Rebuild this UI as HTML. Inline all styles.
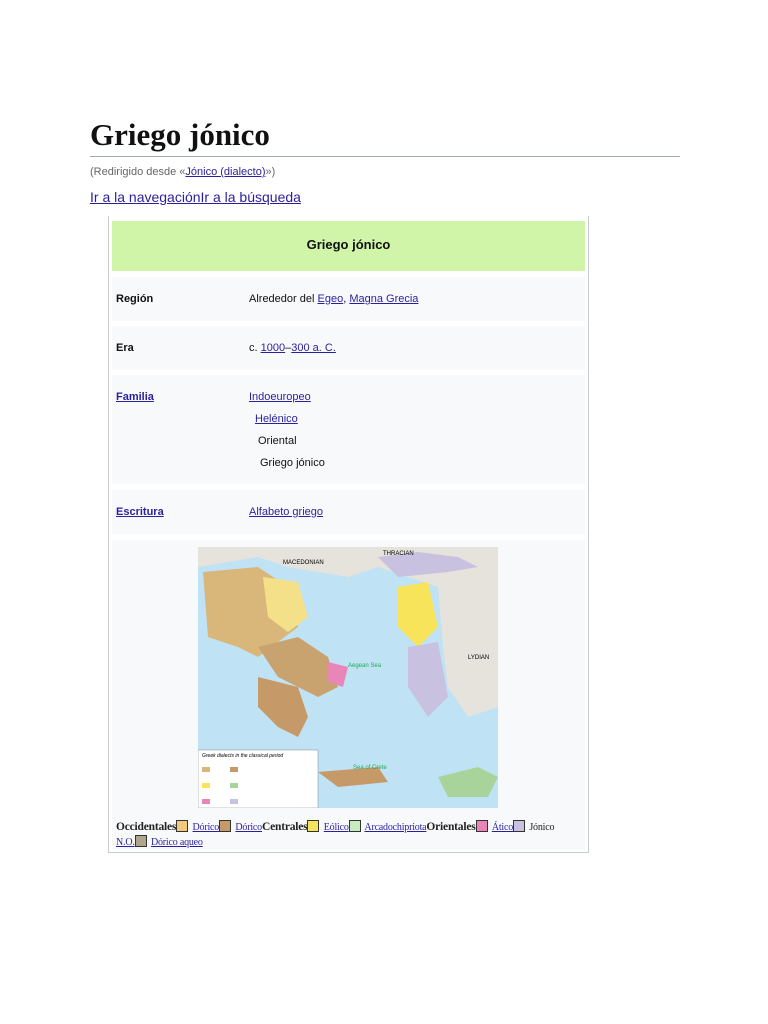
<!DOCTYPE html>
<html><head><meta charset="utf-8"><style>
body{margin:0;background:#fff;width:768px;height:1024px;position:relative;font-family:"Liberation Sans",sans-serif;overflow:hidden}
.a{position:absolute}
a{color:#2a1f9e;text-decoration:underline}
h1{position:absolute;left:90px;top:117px;margin:0;font-family:"Liberation Serif",serif;font-size:31px;font-weight:bold;color:#111;letter-spacing:0px}
.row{position:absolute;left:112px;width:473px;background:#f8f9fa}
.k{position:absolute;left:4px;font-size:11px;font-weight:bold;color:#111}
.v{position:absolute;left:137px;font-size:11px;color:#111}
.leg{font-family:"Liberation Serif",serif;font-size:10px;color:#222;letter-spacing:-0.2px}
.sw{display:inline-block;width:10px;height:10px;border:1px solid #333;vertical-align:-2px;margin-right:2px}
</style></head><body>
<h1>Griego jónico</h1>
<div class="a" style="left:90px;top:156px;width:590px;height:1px;background:#a2a9b1"></div>
<div class="a" style="left:90px;top:166px;font-size:11px;color:#666">(Redirigido desde «<a href="#">Jónico (dialecto)</a>»)</div>
<div class="a" style="left:90px;top:189px;font-size:14px"><a href="#">Ir a la navegación</a><a href="#">Ir a la búsqueda</a></div>
<div class="a" style="left:108px;top:216px;width:479px;height:636px;border:1px solid #c8ccd1;border-top:none;background:#fff"></div>
<div class="a" style="left:112px;top:221px;width:473px;height:50px;background:#d0f4a8"></div>
<div class="a" style="left:112px;top:237px;width:473px;text-align:center;font-size:13px;font-weight:bold;color:#111">Griego jónico</div>
<div class="row" style="top:277px;height:44px"><span class="k" style="top:16px">Región</span><span class="v" style="top:16px">Alrededor del <a href="#">Egeo</a>, <a href="#">Magna Grecia</a></span></div>
<div class="row" style="top:326px;height:44px"><span class="k" style="top:16px">Era</span><span class="v" style="top:16px">c. <a href="#">1000</a>–<a href="#">300 a. C.</a></span></div>
<div class="row" style="top:375px;height:109px"><span class="k" style="top:16px"><a href="#">Familia</a></span>
<span class="v" style="top:16px"><a href="#">Indoeuropeo</a></span>
<span class="v" style="top:38px;left:143px"><a href="#">Helénico</a></span>
<span class="v" style="top:60px;left:146px">Oriental</span>
<span class="v" style="top:82px;left:148px">Griego jónico</span></div>
<div class="row" style="top:490px;height:44px"><span class="k" style="top:16px"><a href="#">Escritura</a></span><span class="v" style="top:16px"><a href="#">Alfabeto griego</a></span></div>
<div class="row" style="top:540px;height:310px"></div>
<svg class="a" style="left:198px;top:547px" width="300" height="261" viewBox="0 0 300 261">
<rect width="300" height="261" fill="#bfe3f4"/>
<path d="M0 0H300V40L280 60 260 80 240 40 210 30 180 20 150 30 120 25 90 20 60 10 30 15 0 20Z" fill="#e6e2dc"/>
<path d="M240 40L300 30V160L270 170 250 140 245 100Z" fill="#e6e2dc"/>
<path d="M5 25L60 20 90 40 100 80 80 95 60 110 40 100 10 90Z" fill="#d9b77a"/>
<path d="M65 30L100 35 110 70 90 85 70 70Z" fill="#f5e08a"/>
<path d="M60 100L100 90 130 110 140 140 120 150 100 140 80 130Z" fill="#c9a36f"/>
<path d="M60 130L100 140 110 170 100 190 80 180 60 160Z" fill="#c69a68"/>
<path d="M130 115L150 120 145 140 130 135Z" fill="#e887b7"/>
<path d="M200 40L230 35 240 80 220 100 200 80Z" fill="#f7e45b"/>
<path d="M210 100L240 95 250 150 230 170 210 140Z" fill="#c9c1e0"/>
<path d="M180 10L220 5 260 10 280 20 250 25 200 30Z" fill="#c9c1e0"/>
<path d="M120 225L180 220 190 235 140 240Z" fill="#c69a68"/>
<path d="M240 230L280 220 300 230 290 250 250 250Z" fill="#a8d49c"/>
<rect x="0" y="203" width="120" height="58" fill="#fff" stroke="#888" stroke-width=".5"/>
<rect x="4" y="220" width="8" height="5" fill="#d9b77a"/><rect x="32" y="220" width="8" height="5" fill="#c69a68"/>
<rect x="4" y="236" width="8" height="5" fill="#f7e45b"/><rect x="32" y="236" width="8" height="5" fill="#a8d49c"/>
<rect x="4" y="252" width="8" height="5" fill="#e887b7"/><rect x="32" y="252" width="8" height="5" fill="#c9c1e0"/>
<text x="4" y="210" font-size="5" font-family="Liberation Sans" font-style="italic">Greek dialects in the classical period</text>
<text x="85" y="17" font-size="6" font-family="Liberation Sans">MACEDONIAN</text>
<text x="185" y="8" font-size="6" font-family="Liberation Sans">THRACIAN</text>
<text x="150" y="120" font-size="6" font-family="Liberation Sans" fill="#2a5">Aegean Sea</text>
<text x="155" y="222" font-size="6" font-family="Liberation Sans" fill="#2a5">Sea of Crete</text>
<text x="270" y="112" font-size="6" font-family="Liberation Sans">LYDIAN</text>
</svg>
<div class="a leg" style="left:116px;top:820px;width:475px;line-height:14px;white-space:nowrap"><b style="font-size:11.5px">Occidentales</b><span class="sw" style="background:#f0c97a"></span> <a href="#">Dórico</a><span class="sw" style="background:#c69a68"></span> <a href="#">Dórico</a><b style="font-size:11.5px">Centrales</b><span class="sw" style="background:#f7e45b"></span> <a href="#">Eólico</a><span class="sw" style="background:#c8ecc0"></span> <a href="#">Arcadochipriota</a><b style="font-size:11.5px">Orientales</b><span class="sw" style="background:#e887b7"></span> <a href="#">Ático</a><span class="sw" style="background:#c9c1e0"></span> Jónico<br><a href="#">N.O.</a><span class="sw" style="background:#b0a58a"></span> <a href="#">Dórico aqueo</a></div>
</body></html>
